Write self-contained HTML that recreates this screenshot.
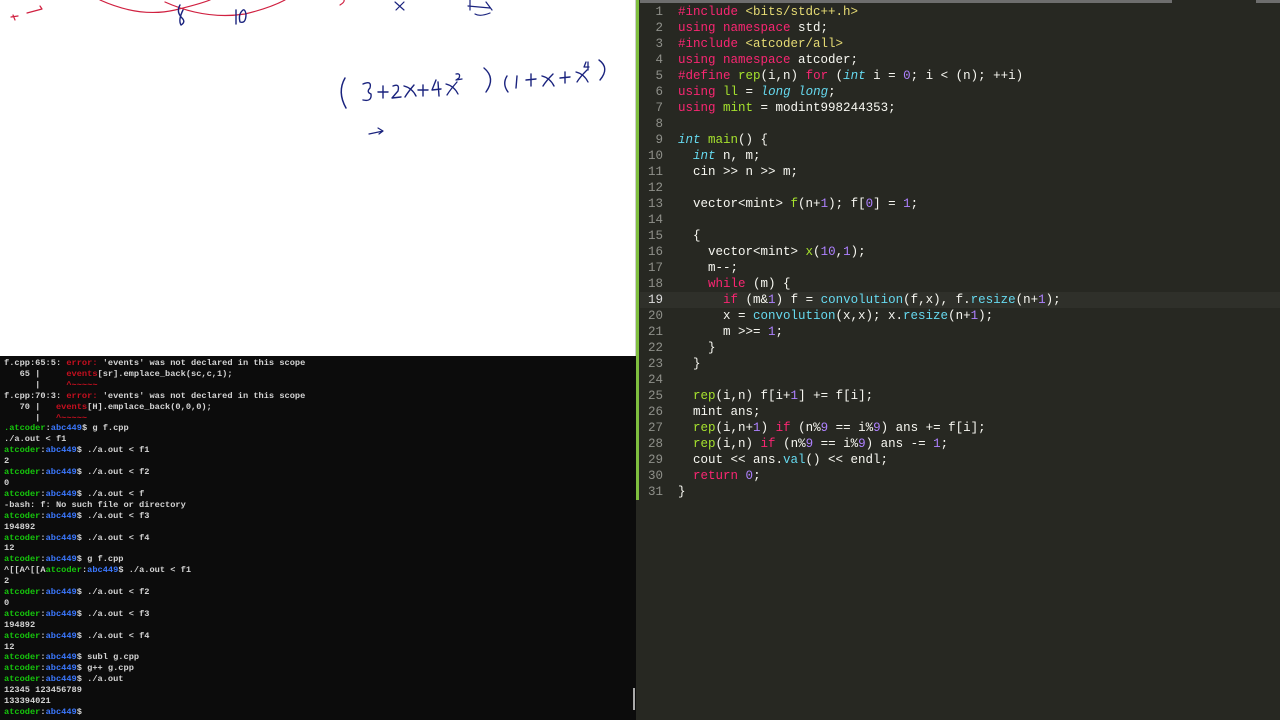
<!DOCTYPE html>
<html><head><meta charset="utf-8"><style>
*{margin:0;padding:0;box-sizing:border-box}
body{width:1280px;height:720px;overflow:hidden;background:#272822;position:relative;font-family:"Liberation Mono",monospace}
#wb{position:absolute;left:0;top:0;width:636px;height:356px;background:#fff;border-right:1px solid #ccc}
#term{position:absolute;left:0;top:356px;width:636px;height:364px;background:#0c0c0c;color:#d4d4d4;font-size:8.67px;line-height:10.9px;padding:2px 0 0 4px;white-space:pre;font-weight:bold}
#ed{position:absolute;left:636px;top:0;width:644px;height:720px;background:#272822}
#green{position:absolute;left:636px;top:0;width:3px;height:500px;background:#7fbf3f}
#topbar{position:absolute;left:640px;top:0;width:532px;height:3px;background:#6e6e6e}
#topbar2{position:absolute;left:1256px;top:0;width:24px;height:3px;background:#6e6e6e}
#code{position:absolute;left:640px;top:4px;font-size:12.5px;line-height:16px;white-space:pre;color:#f8f8f2}
.ln{display:inline-block;width:23px;text-align:right;color:#8f908a;margin-right:15px}
.k{color:#f92672}.f{color:#a6e22e}.t{color:#66d9ef;font-style:italic}.n{color:#ae81ff}.c{color:#66d9ef}
.g{color:#16c60c}.b{color:#3b78ff}.r{color:#e74856}.e{color:#c50f1f}
#l19{position:absolute;left:640px;top:292px;width:640px;height:16px;background:#2f302a}
</style></head><body>
<div id="wb">
<svg width="636" height="356" viewBox="0 0 636 356">
<g fill="none" stroke-linecap="round" stroke-linejoin="round">
<path d="M13 15 L15 20 M11 17 L18 16 M27 13 L42 9 M40 6 L42 9" stroke="#d02040" stroke-width="1.2"/>
<path d="M100 0 Q140 18 175 10 Q200 4 210 0 M165 2 Q205 20 245 14 Q270 8 285 0" stroke="#d02040" stroke-width="1.2"/>
<path d="M180 5 Q176 12 182 18 Q186 22 181 25 Q178 20 183 10" stroke="#1a237e" stroke-width="1.4"/>
<path d="M236 10 L236 24 M243 10 Q238 14 240 22 Q246 24 246 14 Q245 9 243 10" stroke="#1a237e" stroke-width="1.4"/>
<path d="M340 5 Q345 2 344 0" stroke="#d02040" stroke-width="1.2"/>
<path d="M395 2 L404 10 M404 2 L396 10" stroke="#1a237e" stroke-width="1.2"/>
<path d="M470 0 L470 10 M468 6 L490 8 M475 14 Q480 17 490 13 M486 2 L492 10" stroke="#1a237e" stroke-width="1.2"/>
<path d="M345 78 Q337 92 346 108" stroke="#1a237e" stroke-width="1.5"/>
<path d="M363 84 Q372 80 370 88 Q366 92 371 94 Q372 102 363 100" stroke="#1a237e" stroke-width="1.4"/>
<path d="M378 92 L388 92 M383 86 L383 98" stroke="#1a237e" stroke-width="1.4"/>
<path d="M393 86 Q400 83 398 91 L392 98 L401 97" stroke="#1a237e" stroke-width="1.4"/>
<path d="M404 86 Q412 88 416 96 M414 85 Q408 92 405 97" stroke="#1a237e" stroke-width="1.4"/>
<path d="M418 90 L428 90 M423 85 L423 96" stroke="#1a237e" stroke-width="1.4"/>
<path d="M436 80 L432 90 L441 89 M438 82 L439 96" stroke="#1a237e" stroke-width="1.4"/>
<path d="M446 84 Q454 86 458 94 M457 82 Q450 90 447 95 M456 74 Q461 73 459 78 L456 80 L462 79" stroke="#1a237e" stroke-width="1.3"/>
<path d="M484 68 Q496 78 486 92" stroke="#1a237e" stroke-width="1.4"/>
<path d="M507 76 Q502 84 508 92" stroke="#1a237e" stroke-width="1.4"/>
<path d="M517 76 L516 88" stroke="#1a237e" stroke-width="1.4"/>
<path d="M526 80 L536 79 M531 74 L531 86" stroke="#1a237e" stroke-width="1.4"/>
<path d="M542 76 Q550 78 554 86 M553 74 Q546 81 543 86" stroke="#1a237e" stroke-width="1.4"/>
<path d="M560 78 L570 77 M565 72 L565 83" stroke="#1a237e" stroke-width="1.4"/>
<path d="M576 72 Q584 74 588 82 M587 70 Q580 77 577 82 M586 62 L584 67 L589 67 M588 62 L588 70" stroke="#1a237e" stroke-width="1.3"/>
<path d="M599 60 Q610 68 600 80" stroke="#1a237e" stroke-width="1.4"/>
<path d="M369 134 L383 131 M378 128 L383 131 L379 134" stroke="#1a237e" stroke-width="1.2"/>
</g></svg>
</div>
<div id="term"><span>f.cpp:65:5: </span><span class="e">error:</span> 'events' was not declared in this scope
   65 |     <span class="e">events</span>[sr].emplace_back(sc,c,1);
      |     <span class="e">^~~~~~</span>
f.cpp:70:3: <span class="e">error:</span> 'events' was not declared in this scope
   70 |   <span class="e">events</span>[H].emplace_back(0,0,0);
      |   <span class="e">^~~~~~</span>
<span class="g">.atcoder</span>:<span class="b">abc449</span>$ g f.cpp
./a.out &lt; f1
<span class="g">atcoder</span>:<span class="b">abc449</span>$ ./a.out &lt; f1
2
<span class="g">atcoder</span>:<span class="b">abc449</span>$ ./a.out &lt; f2
0
<span class="g">atcoder</span>:<span class="b">abc449</span>$ ./a.out &lt; f
-bash: f: No such file or directory
<span class="g">atcoder</span>:<span class="b">abc449</span>$ ./a.out &lt; f3
194892
<span class="g">atcoder</span>:<span class="b">abc449</span>$ ./a.out &lt; f4
12
<span class="g">atcoder</span>:<span class="b">abc449</span>$ g f.cpp
^[[A^[[A<span class="g">atcoder</span>:<span class="b">abc449</span>$ ./a.out &lt; f1
2
<span class="g">atcoder</span>:<span class="b">abc449</span>$ ./a.out &lt; f2
0
<span class="g">atcoder</span>:<span class="b">abc449</span>$ ./a.out &lt; f3
194892
<span class="g">atcoder</span>:<span class="b">abc449</span>$ ./a.out &lt; f4
12
<span class="g">atcoder</span>:<span class="b">abc449</span>$ subl g.cpp
<span class="g">atcoder</span>:<span class="b">abc449</span>$ g++ g.cpp
<span class="g">atcoder</span>:<span class="b">abc449</span>$ ./a.out
12345 123456789
133394021
<span class="g">atcoder</span>:<span class="b">abc449</span>$</div>
<div style="position:absolute;left:633px;top:688px;width:2px;height:22px;background:#aaa"></div>
<div id="ed"></div>
<div id="l19"></div>
<div id="green"></div>
<div id="topbar"></div><div id="topbar2"></div>
<div id="code"><span class="ln">1</span><span class="k">#include</span> <span style="color:#e6db74">&lt;bits/stdc++.h&gt;</span>
<span class="ln">2</span><span class="k">using namespace</span> std;
<span class="ln">3</span><span class="k">#include</span> <span style="color:#e6db74">&lt;atcoder/all&gt;</span>
<span class="ln">4</span><span class="k">using namespace</span> atcoder;
<span class="ln">5</span><span class="k">#define</span> <span class="f">rep</span>(i,n) <span class="k">for</span> (<span class="t">int</span> i = <span class="n">0</span>; i &lt; (n); ++i)
<span class="ln">6</span><span class="k">using</span> <span class="f">ll</span> = <span class="t">long long</span>;
<span class="ln">7</span><span class="k">using</span> <span class="f">mint</span> = modint998244353;
<span class="ln">8</span>
<span class="ln">9</span><span class="t">int</span> <span class="f">main</span>() {
<span class="ln">10</span>  <span class="t">int</span> n, m;
<span class="ln">11</span>  cin &gt;&gt; n &gt;&gt; m;
<span class="ln">12</span>
<span class="ln">13</span>  vector&lt;mint&gt; <span class="f">f</span>(n+<span class="n">1</span>); f[<span class="n">0</span>] = <span class="n">1</span>;
<span class="ln">14</span>
<span class="ln">15</span>  {
<span class="ln">16</span>    vector&lt;mint&gt; <span class="f">x</span>(<span class="n">10</span>,<span class="n">1</span>);
<span class="ln">17</span>    m--;
<span class="ln">18</span>    <span class="k">while</span> (m) {
<span class="ln" style="color:#ddd">19</span>      <span class="k">if</span> (m&amp;<span class="n">1</span>) f = <span class="c">convolution</span>(f,x), f.<span class="c">resize</span>(n+<span class="n">1</span>);
<span class="ln">20</span>      x = <span class="c">convolution</span>(x,x); x.<span class="c">resize</span>(n+<span class="n">1</span>);
<span class="ln">21</span>      m &gt;&gt;= <span class="n">1</span>;
<span class="ln">22</span>    }
<span class="ln">23</span>  }
<span class="ln">24</span>
<span class="ln">25</span>  <span class="f">rep</span>(i,n) f[i+<span class="n">1</span>] += f[i];
<span class="ln">26</span>  mint ans;
<span class="ln">27</span>  <span class="f">rep</span>(i,n+<span class="n">1</span>) <span class="k">if</span> (n%<span class="n">9</span> == i%<span class="n">9</span>) ans += f[i];
<span class="ln">28</span>  <span class="f">rep</span>(i,n) <span class="k">if</span> (n%<span class="n">9</span> == i%<span class="n">9</span>) ans -= <span class="n">1</span>;
<span class="ln">29</span>  cout &lt;&lt; ans.<span class="c">val</span>() &lt;&lt; endl;
<span class="ln">30</span>  <span class="k">return</span> <span class="n">0</span>;
<span class="ln">31</span>}</div>
</body></html>
